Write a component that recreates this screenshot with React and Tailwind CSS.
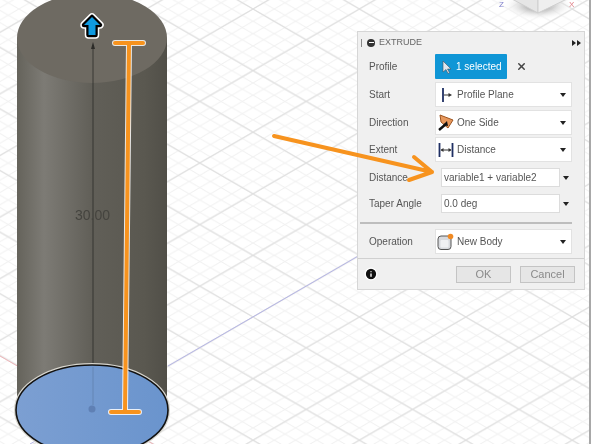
import { Info, X } from 'lucide-react'

function Caret() {
  return <span className="w-0 h-0 border-x-[3px] border-x-transparent border-t-[4px] border-t-[#222]" />
}

function StartIcon() {
  return (
    <svg width="16" height="16" viewBox="0 0 16 16" fill="none">
      <path d="M5 1v14" stroke="#1f2f63" strokeWidth="1.800" />
      <path d="M6 8h6" stroke="#333" />
      <path d="M10.500 6l3.500 2-3.500 2z" fill="#333" />
    </svg>
  )
}

function DirectionIcon() {
  return (
    <svg width="17" height="17" viewBox="0 0 17 17" fill="none">
      <path d="M3 1l13 5-5 8-7-6z" fill="#e8985c" stroke="#9c5420" />
      <path d="M2 16l7-6" stroke="#111" strokeWidth="2.400" />
      <path d="M10 7l1 5-5-1z" fill="#111" />
    </svg>
  )
}

function DistanceIcon() {
  return (
    <svg width="16" height="16" viewBox="0 0 16 16" fill="none">
      <path d="M1.500 1v14M14.500 1v14" stroke="#1f2f63" strokeWidth="1.800" />
      <path d="M3 8h10" stroke="#333" />
      <path d="M5.500 6L2.500 8l3 2zM10.500 6l3 2-3 2z" fill="#333" />
    </svg>
  )
}

function BodyIcon() {
  return (
    <svg width="17" height="17" viewBox="0 0 17 17" fill="none">
      <rect x="1" y="3" width="13" height="13.500" rx="3" fill="#d8dade" stroke="#555" />
      <rect x="3.500" y="7" width="8" height="7.500" rx="1" fill="#f0f1f3" />
      <circle cx="13.500" cy="3.500" r="2.800" fill="#f08a24" />
    </svg>
  )
}

function Row({ label, children, className = '' }) {
  return (
    <div className={`flex items-center ${className}`}>
      <span className="w-[66px] shrink-0 text-[10px] text-[#555]">{label}</span>
      {children}
    </div>
  )
}

function Select({ icon, text }) {
  return (
    <div className="w-[137px] h-[25px] bg-white border border-[#e2e2e2] flex items-center pl-px pr-[5px] gap-[3px] text-[10px] text-[#555]">
      <span className="w-[17px] flex justify-center">{icon}</span>
      <span className="flex-1">{text}</span>
      <Caret />
    </div>
  )
}

function ValueInput({ value }) {
  return (
    <div className="flex items-center ml-[6px]">
      <div className="w-[119px] h-[19px] bg-white border border-[#dcdcdc] flex items-center pl-[2px] text-[10px] text-[#555]">{value}</div>
      <span className="ml-[3px] flex"><Caret /></span>
    </div>
  )
}

function Canvas() {
  return (
    <svg className="absolute inset-0" width="592" height="444" viewBox="0 0 592 444">
      <defs>
        <pattern id="minor" width="21.280" height="12.320" patternUnits="userSpaceOnUse" patternTransform="translate(40.200 9)">
          <path d="M0 0L21.280 12.320M0 12.320L21.280 0" stroke="#f0f0f0" strokeWidth="1" />
        </pattern>
        <pattern id="major" width="106.400" height="61.600" patternUnits="userSpaceOnUse" patternTransform="translate(40.200 9)">
          <path d="M0 0L106.400 61.600M0 61.600L106.400 0" stroke="#e0e0e0" strokeWidth="1.100" />
        </pattern>
        <linearGradient id="side" x1="0" x2="1" y1="0" y2="0">
          <stop offset="0" stopColor="#65635b" />
          <stop offset="0.18" stopColor="#7d7b75" />
          <stop offset="0.5" stopColor="#615f58" />
          <stop offset="0.85" stopColor="#5a5850" />
          <stop offset="1" stopColor="#514f48" />
        </linearGradient>
        <linearGradient id="disc" x1="0" x2="1" y1="0" y2="0">
          <stop offset="0" stopColor="#7c9fd2" />
          <stop offset="1" stopColor="#6a94cd" />
        </linearGradient>
        <radialGradient id="cubeShadow">
          <stop offset="0.3" stopColor="#bbb" />
          <stop offset="1" stopColor="#fff" stopOpacity="0" />
        </radialGradient>
      </defs>
      <rect width="592" height="444" fill="#fff" />
      <rect width="592" height="444" fill="url(#minor)" />
      <rect width="592" height="444" fill="url(#major)" />

      <path d="M0 356L160 448" stroke="#eeb4b8" />
      <path d="M168 366L360 255" stroke="#b6b6e6" />
      <path d="M30 444L46 435" stroke="#b6b6e6" />

      {/* view cube */}
      <ellipse cx="538" cy="6" rx="36" ry="14" fill="url(#cubeShadow)" />
      <path d="M512 -1L538 13V-1z" fill="#e6e6e6" stroke="#cfcfcf" />
      <path d="M538 13L567 -1H538z" fill="#efefef" stroke="#cfcfcf" />
      <text x="499" y="7" fontSize="8" fill="#8080cc" fontFamily="Liberation Sans, sans-serif">Z</text>
      <text x="569" y="7" fontSize="8" fill="#e08088" fontFamily="Liberation Sans, sans-serif">X</text>

      {/* cylinder */}
      <path d="M17 38V409H167V38z" fill="url(#side)" />
      <ellipse cx="92" cy="38" rx="75" ry="45" fill="#6e6a62" />
      <path d="M93 46V366" stroke="#2c2b28" strokeWidth="0.800" />
      <ellipse cx="92" cy="410" rx="76" ry="45" fill="url(#disc)" stroke="#d8d6ce" strokeWidth="4" />
      <ellipse cx="92" cy="410" rx="76" ry="45" fill="url(#disc)" stroke="#111" strokeWidth="1.600" />
      <path d="M93 367V405" stroke="#5f80ad" strokeWidth="0.800" />
      <circle cx="92" cy="409" r="3.500" fill="#5f80b4" />

      {/* frame on the right */}
      <rect x="589" width="3" height="444" fill="#fff" />
      <rect x="589" width="2" height="444" fill="#a8a8a8" />
    </svg>
  )
}

function Overlay() {
  const handle = 'M92 17L100 25H95.500V35H88.500V25H84z'
  return (
    <svg className="absolute inset-0 pointer-events-none" width="592" height="444" viewBox="0 0 592 444" fill="none">
      {/* blue move handle */}
      <g strokeLinejoin="round">
        <path d={handle} stroke="#fff" strokeWidth="7.500" />
        <path d={handle} stroke="#000" strokeWidth="4.500" />
        <path d={handle} fill="#0f9ae0" />
      </g>
      <path d="M93 42l-2 7h4z" fill="#2c2b28" />

      {/* orange annotations */}
      <g stroke="#fff" strokeWidth="6" strokeLinecap="round" opacity="0.85">
        <path d="M115 43H143M129 43L125 412M111 412H139" />
      </g>
      <g stroke="#f7931e" strokeWidth="4" strokeLinecap="round" strokeLinejoin="round">
        <path d="M115 43H143M129 43L125 412M111 412H139" />
        <path d="M274 136L432 172M414 157L432 172L409 180" />
      </g>
    </svg>
  )
}

export default function App() {
  return (
    <div className="relative w-[592px] h-[444px] overflow-hidden bg-white font-['Liberation_Sans',Arial,sans-serif] blur-[0.35px]">
      <Canvas />
      <span className="absolute left-[75px] top-[207px] text-[14px] leading-[16px] text-[#45443f]">30.00</span>

      <div className="absolute left-[357px] top-[31px] w-[228px] h-[259px] bg-[#f0f0f0] border border-[#d6d6d6] flex flex-col">
        <div className="h-[21px] flex items-center pl-[3px] pr-[3px] text-[9px] text-[#666]">
          <span className="w-px h-[8px] bg-[#888] mr-[5px]" />
          <span className="w-[8px] h-[8px] rounded-full bg-[#333] mr-[4px] flex items-center justify-center">
            <span className="w-[5px] h-px bg-white" />
          </span>
          <span className="flex-1">EXTRUDE</span>
          <svg width="9" height="6" viewBox="0 0 9 6">
            <path d="M0 0l4 3-4 3zM5 0l4 3-4 3z" fill="#222" />
          </svg>
        </div>

        <div className="pl-[11px] flex flex-col">
          <Row label="Profile" className="mt-px">
            <div className="w-[72px] h-[25px] bg-[#0f96d6] rounded-[1px] flex items-center pl-[7px] gap-[5px] text-[10px] text-white">
              <svg width="9" height="14" viewBox="0 0 9 14">
                <path d="M1 1v11l3-2.500 2 4 1.500-.8-2-3.700H9z" fill="#dfe7ee" stroke="#44525e" strokeWidth="0.600" />
              </svg>
              1 selected
            </div>
            <X size={11} strokeWidth={3.200} color="#444" className="ml-[9px]" />
          </Row>
          <Row label="Start" className="mt-[3px]">
            <Select icon={<StartIcon />} text="Profile Plane" />
          </Row>
          <Row label="Direction" className="mt-[3px]">
            <Select icon={<DirectionIcon />} text="One Side" />
          </Row>
          <Row label="Extent" className="mt-[2px]">
            <Select icon={<DistanceIcon />} text="Distance" />
          </Row>
          <Row label="Distance" className="mt-[6px]">
            <ValueInput value="variable1 + variable2" />
          </Row>
          <Row label="Taper Angle" className="mt-[7px]">
            <ValueInput value="0.0 deg" />
          </Row>
        </div>

        <div className="ml-[2px] mr-[12px] mt-[9px] h-[2px] bg-[#bdbdbd]" />

        <div className="pl-[11px] mt-[5px]">
          <Row label="Operation">
            <Select icon={<BodyIcon />} text="New Body" />
          </Row>
        </div>

        <div className="mt-[4px] flex-1 border-t border-[#d0d0d0] flex items-center pl-[6px] pr-[9px]">
          <Info size={14} fill="#111" color="#fff" strokeWidth={2.400} className="mr-[78px]" />
          <button className="w-[55px] h-[17px] bg-[#e6e6e6] border border-[#c4c4c4] text-[11px] text-[#8a8a8a] flex items-center justify-center">OK</button>
          <button className="ml-[9px] w-[55px] h-[17px] bg-[#e6e6e6] border border-[#c4c4c4] text-[11px] text-[#8a8a8a] flex items-center justify-center">Cancel</button>
        </div>
      </div>

      <Overlay />
    </div>
  )
}
